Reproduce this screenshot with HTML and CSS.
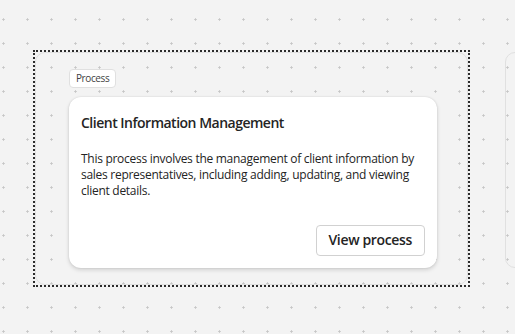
FILE: index.html
```html
<!DOCTYPE html>
<html lang="en">
<head>
    <meta charset="UTF-8">
    <meta name="viewport" content="width=device-width, initial-scale=1.0">
    <title>Process canvas</title>
    <link rel="stylesheet" href="styles.css">
</head>
<body>
    <div class="canvas">
        <div class="group-selected">
            <div class="group-node">
                <span class="tag">Process</span>
                <div class="process-card">
                    <h2 class="card-title">Client Information Management</h2>
                    <p class="card-text">This process involves the management of client information by sales representatives, including adding, updating, and viewing client details.</p>
                    <div class="card-actions">
                        <button class="view-button">View process</button>
                    </div>
                </div>
            </div>
        </div>
        <div class="group-node next-node"></div>
    </div>
</body>
</html>
```

FILE: styles.css
```css
body {
    margin: 0;
    padding: 0;
    background-color: #f3f3f3;
    font-family: "Segoe UI", "Open Sans", sans-serif;
    color: #242424;
}

.canvas {
    position: relative;
    width: 515px;
    height: 334px;
    overflow: hidden;
    background-image: radial-gradient(circle at 3.5px 19.5px, #c6c6c6 0.9px, rgba(198, 198, 198, 0) 1.4px);
    background-size: 24px 24px;
}

/* selection outline around the group */
.group-selected {
    position: absolute;
    left: 33px;
    top: 50px;
    width: 433px;
    height: 233px;
    border: 2px dotted #2b2b2b;
}

.group-node {
    box-sizing: border-box;
    width: 100%;
    height: 100%;
    border: 1px solid #e0e0e0;
    border-radius: 10px;
    padding: 16px 33px;
    display: flex;
    flex-direction: column;
    align-items: flex-start;
}

.next-node {
    position: absolute;
    left: 505px;
    top: 52px;
    width: 200px;
    height: 216px;
}

.tag {
    display: inline-block;
    background-color: white;
    border: 1px solid #e0e0e0;
    border-radius: 4px;
    padding: 2px 6px;
    font-size: 10px;
    line-height: 13px;
    letter-spacing: -0.4px;
    color: #424242;
}

.process-card {
    box-sizing: border-box;
    margin-top: 9px;
    width: 368px;
    height: 172px;
    background-color: white;
    border-radius: 12px;
    box-shadow: 0 2px 4px rgba(0, 0, 0, 0.14), 0 0 2px rgba(0, 0, 0, 0.12);
    padding: 16px 12px 12px 12px;
    display: flex;
    flex-direction: column;
}

.card-title {
    margin: 0;
    font-size: 14px;
    font-weight: 600;
    line-height: 20px;
    letter-spacing: -0.5px;
}

.card-text {
    margin: 18px 0 0 0;
    font-size: 12px;
    line-height: 16px;
    letter-spacing: -0.28px;
}

.card-actions {
    margin-top: auto;
    display: flex;
    justify-content: flex-end;
}

.view-button {
    font-family: "Segoe UI", "Open Sans", sans-serif;
    font-size: 14px;
    font-weight: 600;
    line-height: 20px;
    letter-spacing: -0.35px;
    color: #242424;
    background-color: white;
    border: 1px solid #d1d1d1;
    border-radius: 4px;
    padding: 4px 12px 5px 12px;
    cursor: pointer;
}
```
